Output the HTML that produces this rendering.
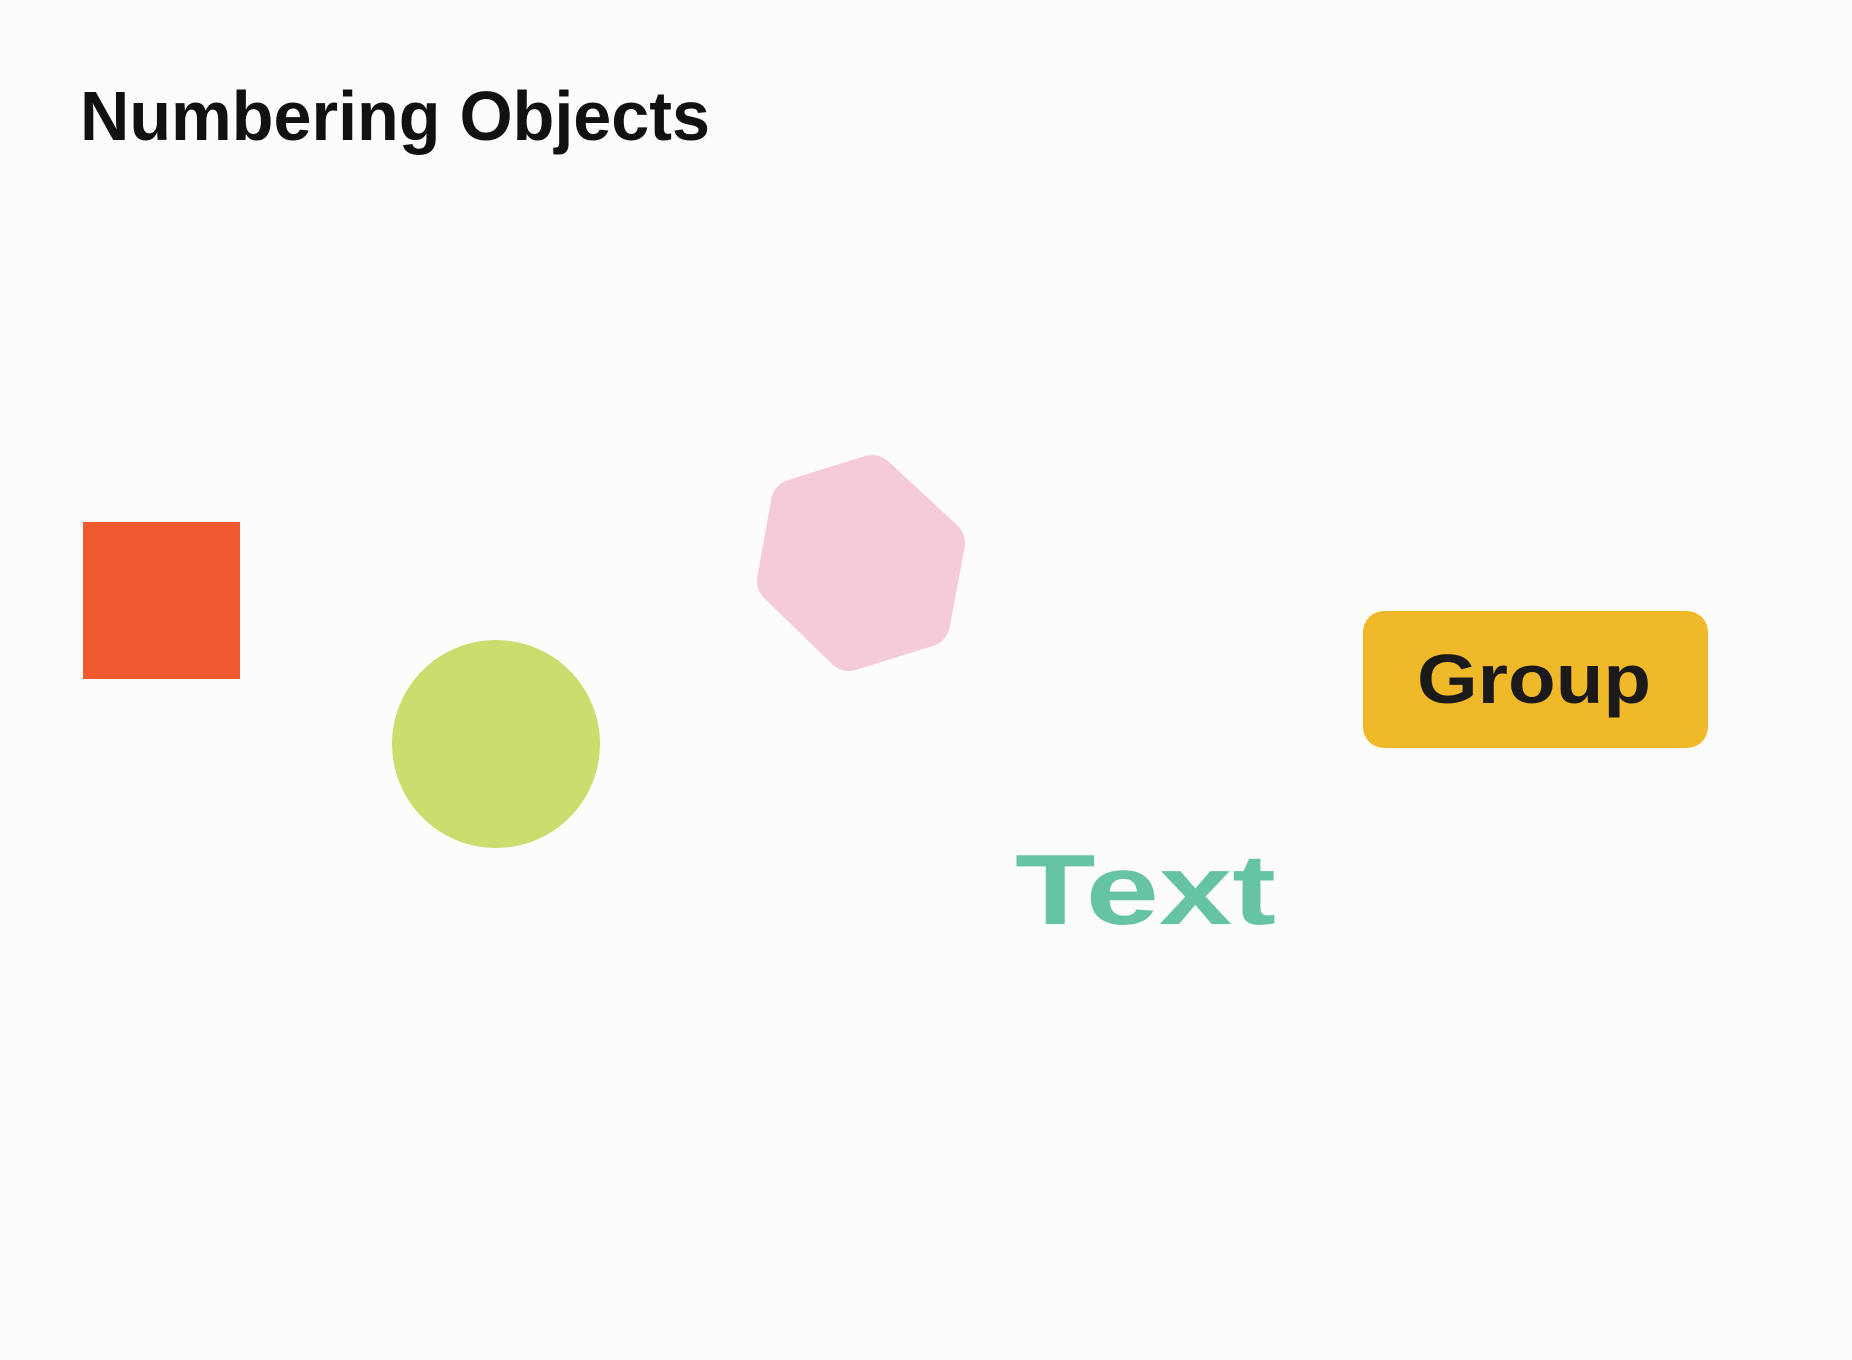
<!DOCTYPE html>
<html><head><meta charset="utf-8"><style>
html,body{margin:0;padding:0;background:#fcfcfa;}
body{width:1852px;height:1360px;overflow:hidden;position:relative;}
</style></head><body>
<svg width="1852" height="1360" viewBox="0 0 1852 1360" style="position:absolute;left:0;top:0">
<text x="80" y="140" font-family="Liberation Sans, sans-serif" font-weight="bold" font-size="70" textLength="630" lengthAdjust="spacingAndGlyphs" fill="#111">Numbering Objects</text>
<rect x="83" y="522" width="157" height="157" fill="#f05a30"/>
<circle cx="496" cy="744" r="104" fill="#cddc6e"/>
<polygon points="872,479 941,543 926,623 849,647 781,581 795,503" fill="#f5cbd8" stroke="#f5cbd8" stroke-width="48" stroke-linejoin="round"/>
<rect x="1363" y="611" width="345" height="137" rx="21" fill="#f0b92a"/>
<text x="1417" y="703" font-family="Liberation Sans, sans-serif" font-weight="bold" font-size="70" textLength="234" lengthAdjust="spacingAndGlyphs" fill="#1a1a1a">Group</text>
<text x="1015" y="924" font-family="Liberation Sans, sans-serif" font-weight="bold" font-size="100" textLength="261" lengthAdjust="spacingAndGlyphs" fill="#66c4a4">Text</text>
</svg>
</body></html>
